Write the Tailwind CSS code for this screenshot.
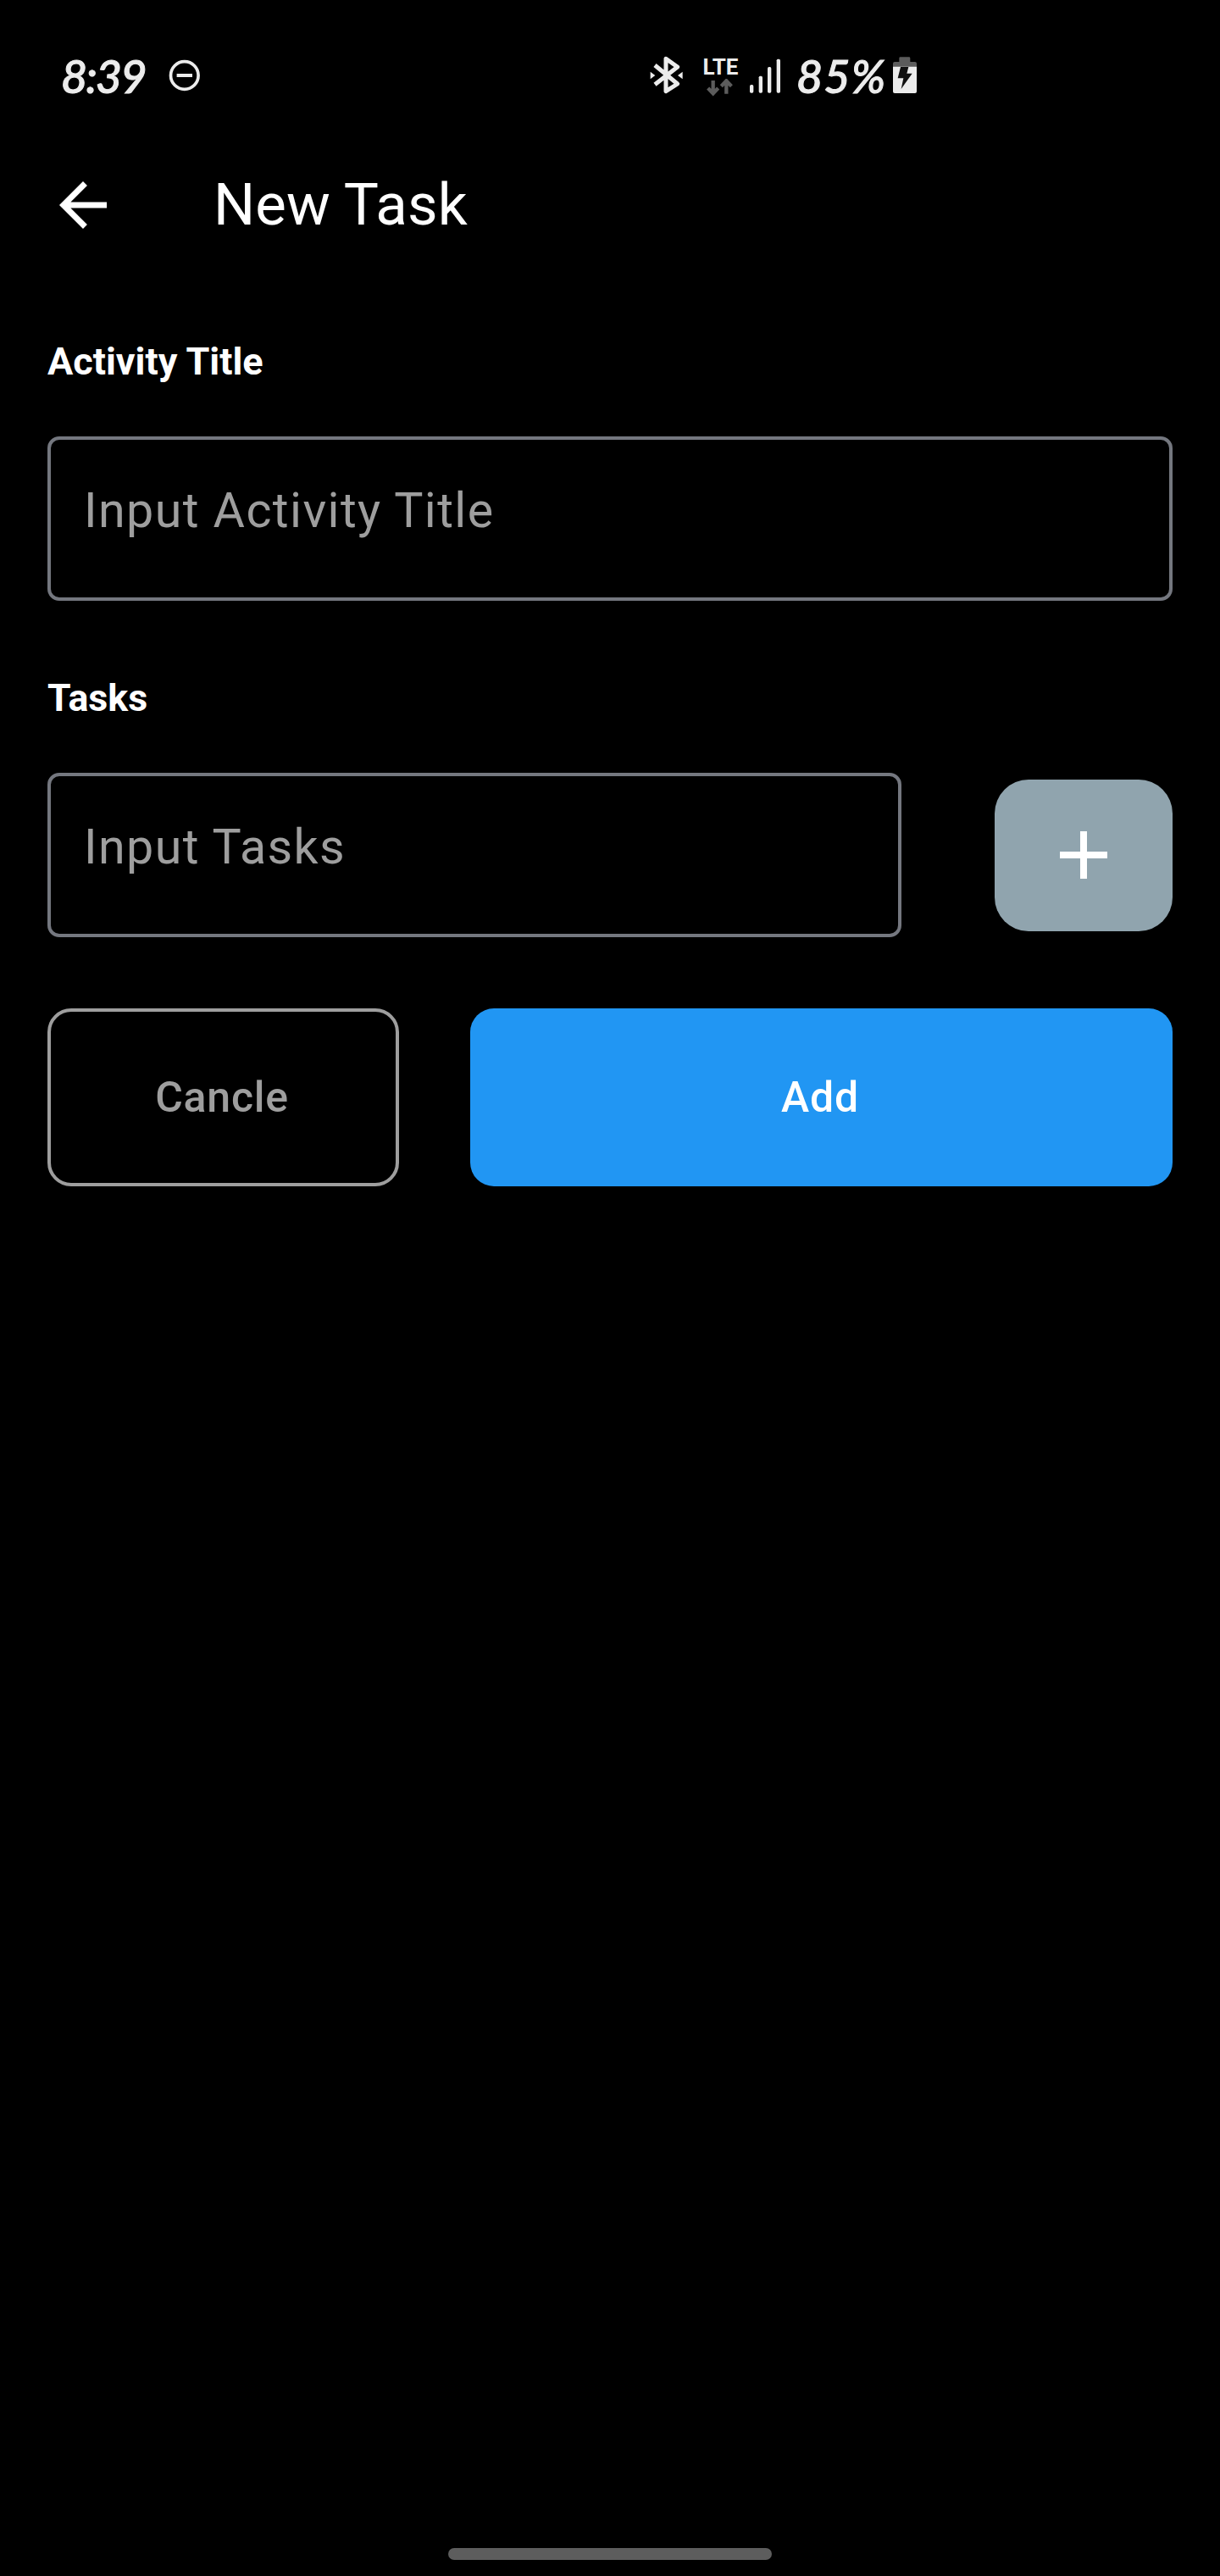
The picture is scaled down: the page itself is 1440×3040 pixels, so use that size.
<!DOCTYPE html>
<html lang="en">
<head>
<meta charset="utf-8">
<title>New Task</title>
<script src="https://cdn.jsdelivr.net/npm/@tailwindcss/browser@4"></script>
</head>
<body class="bg-black">
<div class="flex h-[3040px] w-[1440px] flex-col overflow-hidden bg-black font-[Roboto,sans-serif] text-white">

  <!-- Status bar -->
  <header class="flex h-[180px] items-center pl-[72px] text-[#ececec]">
    <span class="w-[127px] font-[Lato,sans-serif] text-[54px] leading-[60px] font-medium tracking-[-2px] whitespace-nowrap italic [-webkit-text-stroke:1px]">8:39</span>
    <svg class="h-[60px] w-[38px]" viewBox="0 0 38 60" fill="none" stroke="currentColor">
      <circle cx="18.8" cy="29" r="16.3" stroke-width="3.7"/>
      <path d="M9.6 29h18.4" stroke-width="4"/>
    </svg>
    <svg class="ml-[530px] h-[60px] w-[39px]" viewBox="51 30 117 180" fill="none" stroke="currentColor" stroke-width="15">
      <path d="M69 81 L149 147 L108 173 V58 L149 87 L69 149" stroke-linejoin="round"/>
      <path d="M53 104 L70 117 L53 130Z M167 104 L150 117 L167 130Z" fill="currentColor" stroke="none"/>
    </svg>
    <div class="ml-[20px] flex h-[60px] w-[49px] flex-col items-center pt-[5px]">
      <span class="text-[26px] leading-[28px] font-bold">LTE</span>
      <svg class="h-[21px] w-[41px]" viewBox="240 128 123 63" fill="none" stroke="#5c5c5c" stroke-width="13">
        <path d="M275 134V178M257 161L275 180L293 161"/>
        <path d="M322 181V136M304 154L322 135L340 154"/>
      </svg>
    </div>
    <svg class="ml-[10px] h-[60px] w-[37px]" viewBox="405 30 111 180" fill="currentColor">
      <rect x="405" y="150" width="13" height="29" rx="5"/>
      <rect x="437" y="119" width="13" height="60" rx="5"/>
      <rect x="468" y="87" width="13" height="92" rx="5"/>
      <rect x="500" y="59" width="13" height="120" rx="5"/>
    </svg>
    <span class="ml-[18px] w-[114px] font-[Lato,sans-serif] text-[54px] leading-[60px] font-medium tracking-[1px] whitespace-nowrap italic [-webkit-text-stroke:1px]">85%</span>
    <svg class="h-[60px] w-[28px]" viewBox="912 30 84 180">
      <path d="M912 87V75Q912 69 918 69H934V56Q934 52 938 52H969Q973 52 973 56V69H990Q996 69 996 75V87Z" fill="#5c5c5c"/>
      <path d="M912 86H996V174Q996 180 990 180H918Q912 180 912 174Z" fill="currentColor"/>
      <path d="M939 87H967L961 110H980L941 165L949 127H929Z" fill="#111"/>
    </svg>
  </header>

  <!-- App bar -->
  <div class="flex h-[123px] items-center px-14">
    <svg class="size-[84px]" viewBox="0 0 24 24" fill="currentColor">
      <path d="M20 11H7.83l5.59-5.59L12 4l-8 8 8 8 1.41-1.41L7.83 13H20v-2z"/>
    </svg>
    <h1 class="ml-28 text-[69px] leading-[84px] tracking-[0.1px]">New Task</h1>
  </div>

  <main class="flex flex-col px-14">
    <label class="mt-[97px] h-[54px] text-[45px] leading-[54px] font-bold">Activity Title</label>
    <div class="mt-[61px] h-[194px] rounded-[14px] border-4 border-[#74777f] px-[39px] pt-[49px] text-[57.4px] leading-[70px] tracking-[1.4px] text-[#9e9e9e]">Input Activity Title</div>

    <label class="mt-[88px] h-[54px] text-[44.7px] leading-[54px] font-bold">Tasks</label>
    <div class="mt-[61px] flex items-center justify-between">
      <div class="h-[194px] w-[1008px] rounded-[14px] border-4 border-[#74777f] px-[39px] pt-[49px] text-[57.4px] leading-[70px] tracking-[1.4px] text-[#9e9e9e]">Input Tasks</div>
      <button class="flex h-[179px] w-[210px] items-center justify-center rounded-[40px] bg-[#90a4ae]">
        <svg class="size-[96px]" viewBox="0 0 24 24" fill="currentColor"><path d="M19 13h-6v6h-2v-6H5v-2h6V5h2v6h6v2z"/></svg>
      </button>
    </div>

    <div class="mt-[84px] flex h-[210px] gap-[84px] text-[50px] font-medium tracking-[0.75px]">
      <button class="w-[415px] rounded-[28px] border-4 border-[#9e9e9e] pr-[3px] text-[#9e9e9e]">Cancle</button>
      <button class="flex-1 rounded-[28px] bg-[#2196f3] pr-[3px] text-white">Add</button>
    </div>
  </main>

  <!-- Gesture bar -->
  <div class="mx-auto mt-auto mb-[19px] h-[14px] w-[382px] rounded-full bg-[#5d5d5d]"></div>
</div>
</body>
</html>
